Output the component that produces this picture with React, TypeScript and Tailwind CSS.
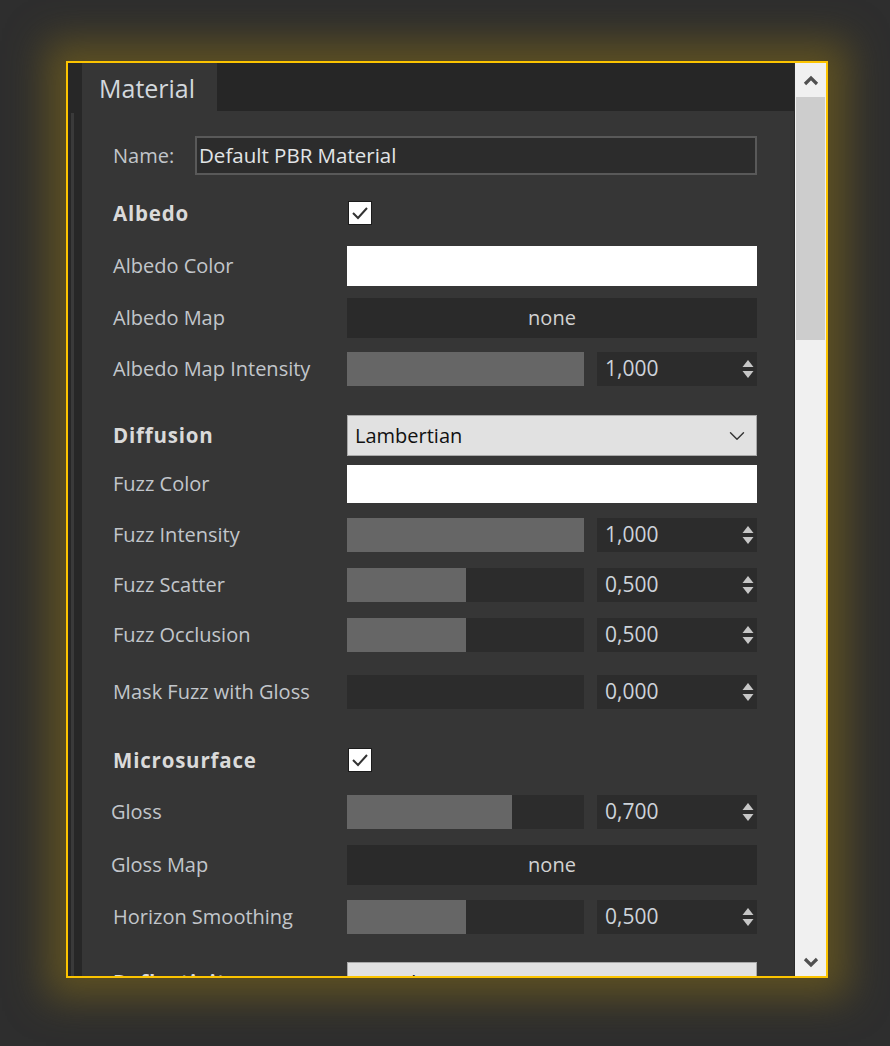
import { ChevronDown } from "lucide-react";

const font = "font-['Open_Sans','Noto_Sans',sans-serif]";

function Label({ children, bold }: { children: string; bold?: boolean }) {
  return (
    <div
      className={`w-[234px] shrink-0 leading-none ${
        bold ? "text-[20.5px] font-bold tracking-[0.8px] text-[#dadada]" : "text-[20px] text-[#c2c6cb]"
      }`}
    >
      {children}
    </div>
  );
}

function Spinner() {
  return (
    <svg width="12" height="22" viewBox="0 0 12 22" className="shrink-0">
      <path d="M6 2 L11.5 9 L0.5 9 Z" fill="#c6c6c6" />
      <path d="M0.5 13 L11.5 13 L6 20 Z" fill="#c6c6c6" />
    </svg>
  );
}

function Checkbox() {
  return (
    <div className="ml-px flex h-[24px] w-[24px] items-center justify-center border border-[#1c1c1c] bg-white">
      <svg width="18" height="14" viewBox="0 0 18 14">
        <path d="M2 7 L7 12 L16 2" fill="none" stroke="#333" strokeWidth="2" />
      </svg>
    </div>
  );
}

function SliderRow({ value, text }: { value: number; text: string }) {
  return (
    <div className="flex h-full w-[410px] gap-[13px]">
      <div className="h-full w-[237px] bg-[#2c2c2c]">
        <div className="h-full bg-[#666666]" style={{ width: `${value * 100}%` }} />
      </div>
      <div className="flex h-full flex-1 items-center justify-between bg-[#2c2c2c] pl-[8px] pr-[3px]">
        <span className="text-[21px] text-[#cdd3da]">{text}</span>
        <Spinner />
      </div>
    </div>
  );
}

function Swatch() {
  return <div className="h-full w-[410px] bg-white" />;
}

function MapSlot() {
  return (
    <div className="flex h-full w-[410px] items-center justify-center bg-[#2a2a2a] text-[20px] text-[#d2d2d2]">
      none
    </div>
  );
}

function Dropdown({ text }: { text: string }) {
  return (
    <div className="flex h-full w-[410px] items-center justify-between border border-[#a8a8a8] bg-[#e1e1e1] pl-[7px] pr-[6px]">
      <span className="text-[20px] text-[#111]">{text}</span>
      <ChevronDown size={26} strokeWidth={1.3} color="#333" />
    </div>
  );
}

export default function App() {
  return (
    <div className={`min-h-screen w-full bg-[#2e2e2e] pl-[66px] pt-[61px] ${font}`}>
      <div className="flex h-[917px] w-[762px] overflow-hidden border-2 border-[#fcc400] shadow-[0_0_36px_20px_rgba(96,82,34,0.95)]">
        {/* left strip */}
        <div className="flex w-[14px] shrink-0 bg-[#272727]">
          <div className="ml-[3px] mt-[50px] w-[3px] bg-[#3a3a3a]" />
        </div>

        {/* main */}
        <div className="flex w-[712px] shrink-0 flex-col">
          <div className="flex h-[48px] shrink-0 bg-[#262626]">
            <div className="flex w-[135px] items-center bg-[#363636] pl-[17px] pt-[3px] text-[25px] text-[#d3d8dd]">
              Material
            </div>
          </div>

          <div className="flex-1 overflow-hidden bg-[#363636] pl-[31px] pt-[25px]">
            <div className="flex h-[39px] items-center">
              <div className="w-[82px] shrink-0 text-[20px] text-[#c2c6cb]">Name:</div>
              <div className="flex h-full w-[562px] items-center border-2 border-[#595959] bg-[#2c2c2c] pl-[2px] text-[20.5px] text-[#e2e4e6]">
                Default PBR Material
              </div>
            </div>

            <div className="mt-[26px] flex h-[24px] items-center">
              <Label bold>Albedo</Label>
              <Checkbox />
            </div>
            <div className="mt-[21px] flex h-[40px] items-center">
              <Label>Albedo Color</Label>
              <Swatch />
            </div>
            <div className="mt-[12px] flex h-[40px] items-center">
              <Label>Albedo Map</Label>
              <MapSlot />
            </div>
            <div className="mt-[14px] flex h-[34px] items-center">
              <Label>Albedo Map Intensity</Label>
              <SliderRow value={1} text="1,000" />
            </div>

            <div className="mt-[29px] flex h-[41px] items-center">
              <Label bold>Diffusion</Label>
              <Dropdown text="Lambertian" />
            </div>
            <div className="mt-[9px] flex h-[38px] items-center">
              <Label>Fuzz Color</Label>
              <Swatch />
            </div>
            <div className="mt-[15px] flex h-[34px] items-center">
              <Label>Fuzz Intensity</Label>
              <SliderRow value={1} text="1,000" />
            </div>
            <div className="mt-[16px] flex h-[34px] items-center">
              <Label>Fuzz Scatter</Label>
              <SliderRow value={0.502} text="0,500" />
            </div>
            <div className="mt-[16px] flex h-[34px] items-center">
              <Label>Fuzz Occlusion</Label>
              <SliderRow value={0.502} text="0,500" />
            </div>
            <div className="mt-[23px] flex h-[34px] items-center">
              <Label>Mask Fuzz with Gloss</Label>
              <SliderRow value={0} text="0,000" />
            </div>

            <div className="mt-[39px] flex h-[24px] items-center">
              <Label bold>Microsurface</Label>
              <Checkbox />
            </div>
            <div className="-ml-[2px] mt-[23px] flex h-[34px] items-center">
              <div className="w-[236px] shrink-0 text-[20px] leading-none text-[#c2c6cb]">Gloss</div>
              <SliderRow value={0.696} text="0,700" />
            </div>
            <div className="-ml-[2px] mt-[16px] flex h-[40px] items-center">
              <div className="w-[236px] shrink-0 text-[20px] leading-none text-[#c2c6cb]">Gloss Map</div>
              <MapSlot />
            </div>
            <div className="mt-[15px] flex h-[34px] items-center">
              <Label>Horizon Smoothing</Label>
              <SliderRow value={0.502} text="0,500" />
            </div>

            <div className="mt-[28px] flex h-[41px] items-center">
              <Label bold>Reflectivity</Label>
              <Dropdown text="Specular" />
            </div>
          </div>
        </div>

        {/* scrollbar */}
        <div className="flex w-[32px] shrink-0 flex-col border-l border-[#2b2b2b] bg-[#f0f0f0]">
          <div className="flex h-[34px] shrink-0 items-center justify-center">
            <svg width="16" height="11" viewBox="0 0 16 11">
              <path d="M2 9 L8 3 L14 9" fill="none" stroke="#505050" strokeWidth="3.2" />
            </svg>
          </div>
          <div className="mx-[1px] h-[243px] bg-[#cdcdcd]" />
          <div className="flex-1" />
          <div className="flex h-[28px] shrink-0 items-center justify-center">
            <svg width="16" height="11" viewBox="0 0 16 11">
              <path d="M2 2 L8 8 L14 2" fill="none" stroke="#505050" strokeWidth="3.2" />
            </svg>
          </div>
        </div>
      </div>
    </div>
  );
}
